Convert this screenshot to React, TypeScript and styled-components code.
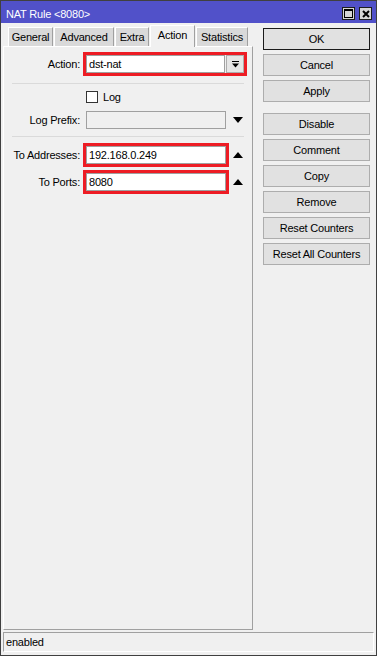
import styled, { createGlobalStyle } from 'styled-components';

const GlobalStyle = createGlobalStyle`
  * {
    box-sizing: border-box;
  }
  html,
  body {
    margin: 0;
    padding: 0;
    background: #f0f0f0;
  }
  body {
    font-family: 'Liberation Sans', Arial, sans-serif;
    font-size: 11px;
    letter-spacing: -0.2px;
    color: #000;
  }
`;

const Window = styled.div`
  width: 377px;
  height: 656px;
  border: 1px solid #404040;
  background: #f0f0f0;
  display: flex;
  flex-direction: column;
`;

const TitleBar = styled.div`
  flex: none;
  height: 22px;
  padding: 3px 4px 0 5px;
  display: flex;
  align-items: center;
  background: #5151c9;
  color: #fff;
`;

const Title = styled.div`
  flex: 1;
`;

const TitleButton = styled.div`
  width: 13px;
  height: 13px;
  margin-left: 4px;
  display: flex;
  align-items: center;
  justify-content: center;
  background: #d6d6d6;
  border: 1px solid #1e1e1e;
`;

const Main = styled.div`
  flex: 1;
  min-height: 0;
  display: flex;
`;

const LeftCol = styled.div`
  width: 250px;
  margin-left: 2px;
  display: flex;
  flex-direction: column;
`;

const TabStrip = styled.div`
  height: 23px;
  flex: none;
  padding-left: 5px;
  display: flex;
  align-items: flex-end;
  gap: 1px;
`;

const Tab = styled.div<{ $w: number; $active?: boolean }>`
  position: relative;
  z-index: ${(p) => (p.$active ? 1 : 0)};
  width: ${(p) => p.$w}px;
  height: ${(p) => (p.$active ? 22 : 19)}px;
  margin-bottom: ${(p) => (p.$active ? -1 : 0)}px;
  padding-bottom: ${(p) => (p.$active ? 3 : 0)}px;
  display: flex;
  align-items: center;
  justify-content: center;
  background: ${(p) => (p.$active ? '#f0f0f0' : '#d9d9d9')};
  border-top: 1px solid #fff;
  border-left: 1px solid #fff;
  border-right: 1px solid #a0a0a0;
  white-space: nowrap;
`;

const Panel = styled.div`
  flex: 1;
  padding-top: 5px;
  border-top: 1px solid #fff;
  border-left: 1px solid #fff;
  border-right: 1px solid #a0a0a0;
  border-bottom: 1px solid #a0a0a0;
`;

const Row = styled.div<{ $top: number }>`
  height: 24px;
  margin-top: ${(p) => p.$top}px;
  display: flex;
  align-items: center;
`;

const Label = styled.div`
  width: 79px;
  padding-right: 3px;
  text-align: right;
  white-space: nowrap;
`;

const Frame = styled.div<{ $marked?: boolean }>`
  display: flex;
  border: 3px solid ${(p) => (p.$marked ? '#ed1c24' : 'transparent')};
`;

const TextBox = styled.div<{ $w: number; $disabled?: boolean }>`
  width: ${(p) => p.$w}px;
  height: 18px;
  padding: 0 2px;
  line-height: 16px;
  background: ${(p) => (p.$disabled ? '#f0f0f0' : '#fff')};
  border: 1px solid #a0a0a0;
  white-space: nowrap;
`;

const DropButton = styled.div`
  width: 18px;
  height: 18px;
  margin-left: 1px;
  display: flex;
  align-items: center;
  justify-content: center;
  background: #e6e6e6;
  border: 1px solid #adadad;
`;

const ArrowSlot = styled.div`
  width: 18px;
  display: flex;
  align-items: center;
  justify-content: center;
`;

const Separator = styled.div<{ $top: number }>`
  height: 1px;
  width: 232px;
  margin: ${(p) => p.$top}px 0 0 8px;
  background: #dadada;
`;

const CheckRow = styled.div`
  height: 12px;
  margin-top: 7px;
  padding-left: 82px;
  display: flex;
  align-items: center;
  gap: 5px;
`;

const CheckBox = styled.div`
  width: 12px;
  height: 12px;
  background: #fff;
  border: 1px solid #333;
`;

const RightCol = styled.div`
  flex: 1;
  padding: 5px 0 0 10px;
  display: flex;
  flex-direction: column;
`;

const Button = styled.div<{ $primary?: boolean; $top: number }>`
  width: 107px;
  height: 22px;
  margin-top: ${(p) => p.$top}px;
  display: flex;
  align-items: center;
  justify-content: center;
  background: #e1e1e1;
  border: 1px solid ${(p) => (p.$primary ? '#1a1a1a' : '#adadad')};
  white-space: nowrap;
`;

const StatusBar = styled.div`
  flex: none;
  height: 20px;
  margin: 2px 2px 3px 2px;
  padding-left: 2px;
  display: flex;
  align-items: center;
  border-top: 1px solid #a0a0a0;
  border-left: 1px solid #a0a0a0;
  border-right: 1px solid #fff;
  border-bottom: 1px solid #fff;
`;

const Triangle = ({ up }: { up?: boolean }) => (
  <svg width="10" height="6" viewBox="0 0 10 6">
    <polygon points={up ? '0,6 10,6 5,0' : '0,0 10,0 5,6'} fill="#000" />
  </svg>
);

const DropIcon = () => (
  <svg width="7" height="7" viewBox="0 0 7 7">
    <rect x="0" y="0" width="7" height="1" fill="#000" />
    <polygon points="0,2.5 7,2.5 3.5,6.5" fill="#000" />
  </svg>
);

const tabs = [
  { name: 'General', w: 45 },
  { name: 'Advanced', w: 60 },
  { name: 'Extra', w: 34 },
  { name: 'Action', w: 45, active: true },
  { name: 'Statistics', w: 52 },
];

const buttons = [
  { name: 'OK', top: 0, primary: true },
  { name: 'Cancel', top: 4 },
  { name: 'Apply', top: 4 },
  { name: 'Disable', top: 11 },
  { name: 'Comment', top: 4 },
  { name: 'Copy', top: 4 },
  { name: 'Remove', top: 4 },
  { name: 'Reset Counters', top: 4 },
  { name: 'Reset All Counters', top: 4 },
];

const App = () => {
  return (
    <>
      <GlobalStyle />
      <Window>
        <TitleBar>
          <Title>NAT Rule &lt;8080&gt;</Title>
          <TitleButton>
            <svg width="9" height="9" viewBox="0 0 9 9">
              <rect x="0.5" y="0.5" width="8" height="8" fill="none" stroke="#000" />
              <rect x="0" y="0" width="9" height="2" fill="#000" />
            </svg>
          </TitleButton>
          <TitleButton>
            <svg width="8" height="8" viewBox="0 0 8 8">
              <path d="M1 1 L7 7 M7 1 L1 7" stroke="#000" strokeWidth="2" />
            </svg>
          </TitleButton>
        </TitleBar>
        <Main>
          <LeftCol>
            <TabStrip>
              {tabs.map((t) => (
                <Tab key={t.name} $w={t.w} $active={t.active}>
                  {t.name}
                </Tab>
              ))}
            </TabStrip>
            <Panel>
              <Row $top={0}>
                <Label>Action:</Label>
                <Frame $marked>
                  <TextBox $w={139}>dst-nat</TextBox>
                  <DropButton>
                    <DropIcon />
                  </DropButton>
                </Frame>
              </Row>
              <Separator $top={7} />
              <CheckRow>
                <CheckBox />
                <span>Log</span>
              </CheckRow>
              <Row $top={5}>
                <Label>Log Prefix:</Label>
                <Frame>
                  <TextBox $w={140} $disabled />
                </Frame>
                <ArrowSlot>
                  <Triangle />
                </ArrowSlot>
              </Row>
              <Separator $top={4} />
              <Row $top={6}>
                <Label>To Addresses:</Label>
                <Frame $marked>
                  <TextBox $w={140}>192.168.0.249</TextBox>
                </Frame>
                <ArrowSlot>
                  <Triangle up />
                </ArrowSlot>
              </Row>
              <Row $top={3}>
                <Label>To Ports:</Label>
                <Frame $marked>
                  <TextBox $w={140}>8080</TextBox>
                </Frame>
                <ArrowSlot>
                  <Triangle up />
                </ArrowSlot>
              </Row>
            </Panel>
          </LeftCol>
          <RightCol>
            {buttons.map((b) => (
              <Button key={b.name} $top={b.top} $primary={b.primary}>
                {b.name}
              </Button>
            ))}
          </RightCol>
        </Main>
        <StatusBar>enabled</StatusBar>
      </Window>
    </>
  );
};

export default App;
